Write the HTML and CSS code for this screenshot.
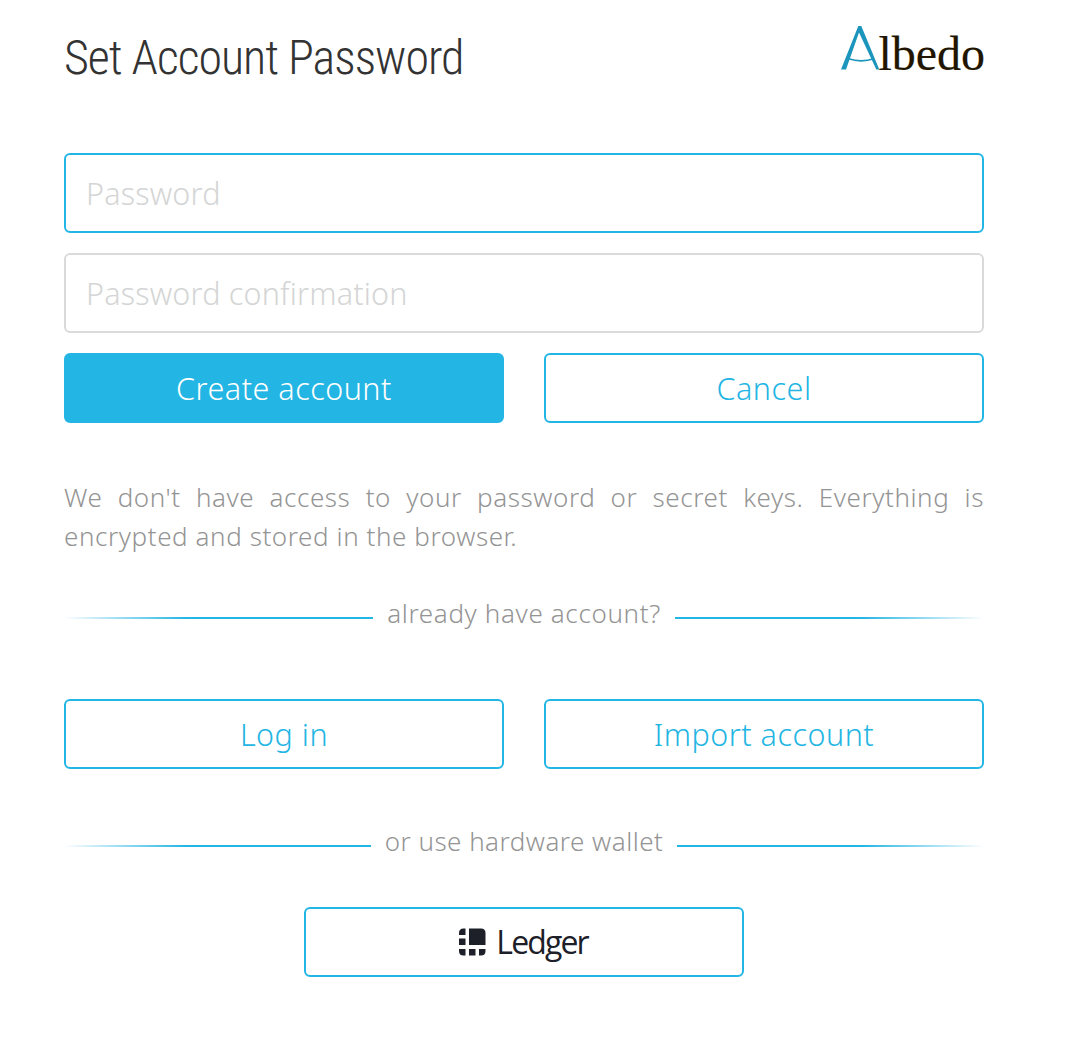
FILE: index.html
```html
<!DOCTYPE html>
<html lang="en">
<head>
<meta charset="utf-8">
<title>Albedo</title>
<link rel="stylesheet" href="styles.css">
</head>
<body>
<main class="page">
  <header class="header">
    <h1 class="title">Set Account Password</h1>
    <svg class="logo" width="152" height="64" viewBox="0 0 152 64" role="img" aria-label="Albedo">
      <path d="M1 44.500 18.300 1h3L39.300 44.500h-3L19 7.500 6 44.500z" fill="#1c95bd"/>
      <path d="M8.500 33.800q12.500 4.200 25.500 0" fill="none" stroke="#1c95bd" stroke-width="1.700"/>
      <text class="logo-text" x="38.500" y="44.500" textLength="106.500" lengthAdjust="spacingAndGlyphs">lbedo</text>
    </svg>
  </header>
  <form class="form">
    <input class="field field-active" type="password" placeholder="Password">
    <input class="field" type="password" placeholder="Password confirmation">
    <div class="row">
      <button class="button button-primary" type="button">Create account</button>
      <button class="button" type="button">Cancel</button>
    </div>
  </form>
  <p class="note">We don't have access to your password or secret keys. Everything is encrypted and stored in the browser.</p>
  <div class="divider divider-login"><span>already have account?</span></div>
  <div class="row">
    <button class="button" type="button">Log in</button>
    <button class="button" type="button">Import account</button>
  </div>
  <div class="divider divider-wallet"><span>or use hardware wallet</span></div>
  <button class="button button-ledger" type="button">
    <svg class="ledger-mark" width="28" height="28" viewBox="0 0 28 28" aria-hidden="true">
      <g fill="#1d2028">
        <path d="M11 .500h12q4.500 0 4.500 4.500v12H11z"/>
        <path d="M7.500.500V7H1V5Q1 .500 5.500.500zM1 10.500h6.500V17H1zM1 21h6.500v6.500h-2Q1 27.500 1 23zM11 21h6.500v6.500H11zM21 21h6.500v2q0 4.500-4.500 4.500h-2z"/>
      </g>
    </svg>
    <span class="ledger-text">Ledger</span>
  </button>
</main>
</body>
</html>
```
FILE: styles.css
```css
* { box-sizing: border-box; }
body {
  margin: 0;
  background: #fff;
  color: #949494;
  font-family: "Noto Sans", sans-serif;
  font-weight: 300;
}
.page { width: 920px; margin: 0 0 0 64px; padding-top: 25px; }
.header { display: flex; justify-content: space-between; height: 128px; }
.title {
  margin: 0;
  color: #333;
  font: 300 48px/66px "Roboto Condensed", Roboto, sans-serif;
  font-stretch: 75%;
  letter-spacing: -1px;
  white-space: nowrap;
}
.logo { margin-right: -8px; flex: none; }
.logo-text { font: 400 48px "Liberation Serif", serif; fill: #211500; stroke: #211500; stroke-width: .2px; }
.form { display: flex; flex-direction: column; gap: 20px; }
.field {
  height: 80px;
  padding: 0 20px 1px;
  border: 2px solid #d9dada;
  border-radius: 6px;
  outline: none;
  background: #fff;
  font: inherit;
  font-size: 30.5px;
  letter-spacing: .2px;
}
.field::placeholder { color: #d4d5d5; opacity: 1; }
.field-active { border-color: #23b5e3; }
.row { display: grid; grid-template-columns: 1fr 1fr; gap: 40px; }
.button {
  display: flex;
  align-items: center;
  justify-content: center;
  height: 70px;
  padding: 0 0 1px;
  border: 2px solid #23b5e3;
  border-radius: 6px;
  background: #fff;
  color: #23b5e3;
  font: inherit;
  font-size: 30.5px;
  letter-spacing: .5px;
}
.button-primary { background: #23b5e3; color: #fff; }
.note {
  margin: 55px 0 0;
  font-size: 26px;
  line-height: 39px;
  letter-spacing: .58px;
  text-align: justify;
}
.divider {
  display: flex;
  align-items: center;
  gap: 14px;
  height: 40px;
  font-size: 26px;
  letter-spacing: .64px;
  white-space: nowrap;
}
.divider span { margin-top: -10px; }
.divider::before, .divider::after { content: ""; flex: 1; height: 2px; }
.divider::before { background: linear-gradient(to right, transparent, #23b5e3 40%); }
.divider::after { background: linear-gradient(to left, transparent, #23b5e3 40%); }
.divider-login { margin: 42px 0 61px; }
.divider-wallet { margin: 57px 0 41px; letter-spacing: .48px; }
.button-ledger { gap: 10px; width: 440px; margin: 0 auto; }
.ledger-mark { margin: 1px 0 0 -2px; }
.ledger-text {
  color: #1d2028;
  font: 400 32px/44px "Open Sans", sans-serif;
  letter-spacing: -1.9px;
  margin-top: 1px;
}
```
